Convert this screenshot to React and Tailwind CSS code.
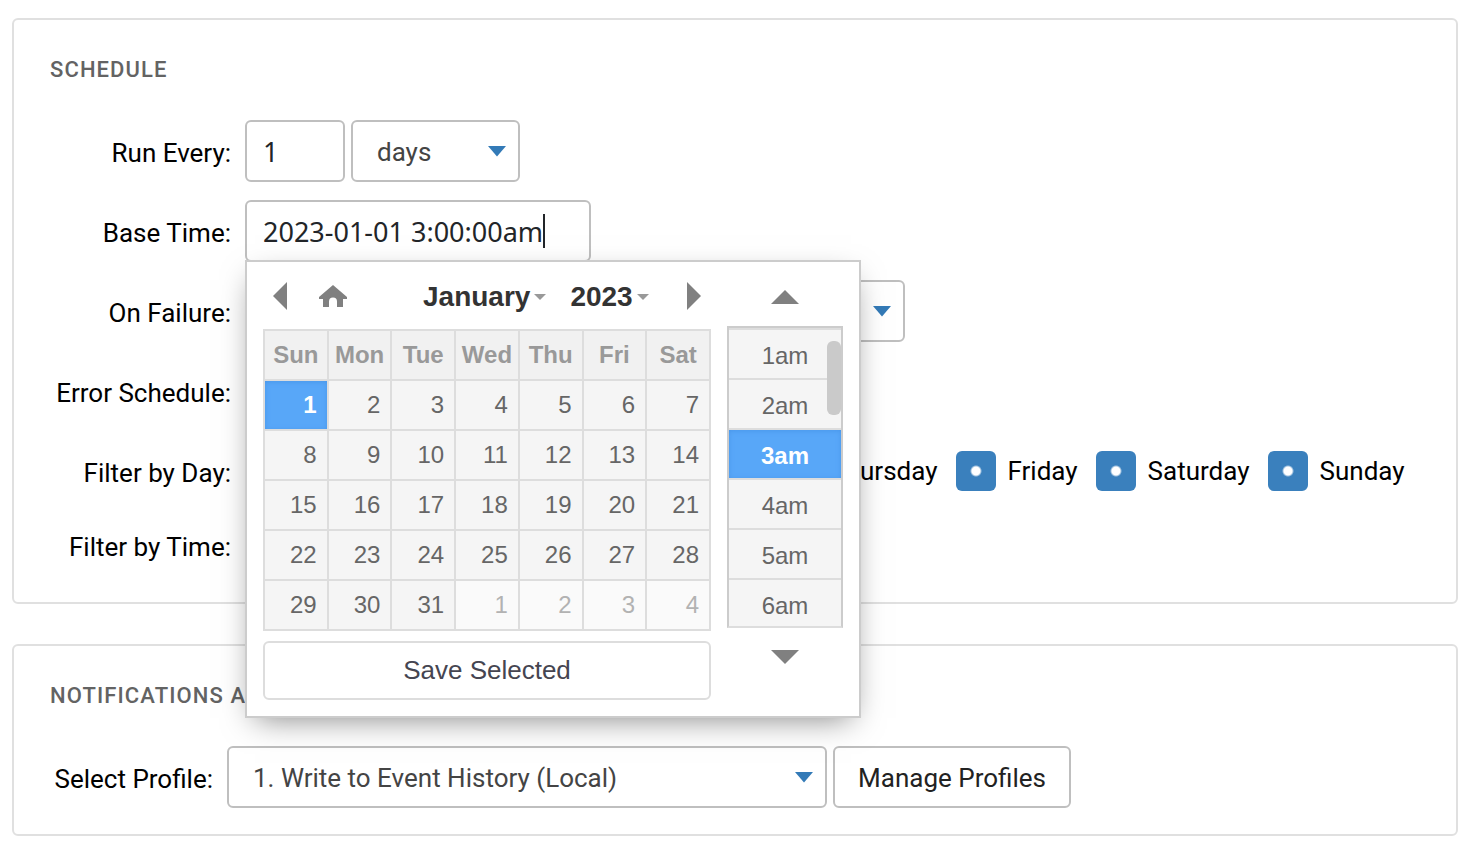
import { useState } from 'react';

const weekDays = ['Sun', 'Mon', 'Tue', 'Wed', 'Thu', 'Fri', 'Sat'];

const weeks = [
  [1, 2, 3, 4, 5, 6, 7],
  [8, 9, 10, 11, 12, 13, 14],
  [15, 16, 17, 18, 19, 20, 21],
  [22, 23, 24, 25, 26, 27, 28],
  [29, 30, 31, 32, 33, 34, 35],
];

const hours = ['1am', '2am', '3am', '4am', '5am', '6am'];

const filterDays = ['Monday', 'Tuesday', 'Wednesday', 'Thursday', 'Friday', 'Saturday', 'Sunday'];

function Card({ title, className, children }) {
  return (
    <section className={`rounded-md border-2 border-[#e0e0e0] px-9 pt-[34px] ${className}`}>
      <h2 className="mb-[34px] text-[22px] leading-8 font-medium tracking-wider whitespace-nowrap text-[#636363]">
        {title}
      </h2>
      {children}
    </section>
  );
}

function Row({ label, htmlFor, className = 'h-[62px]', children }) {
  return (
    <div className={`flex items-center gap-3.5 ${className}`}>
      <label htmlFor={htmlFor} className="w-[181px] shrink-0 pt-1 text-right whitespace-nowrap">
        {label}
      </label>
      {children}
    </div>
  );
}

function SelectBox({ id, className, children }) {
  return (
    <div className={`relative ${className}`}>
      <select
        id={id}
        className="h-[62px] w-full appearance-none rounded-md border-2 border-[#bfbfbf] bg-white pt-0.5 pl-6 text-[#444] outline-none"
      >
        {children}
      </select>
      <svg className="pointer-events-none absolute top-[26px] right-3.5 h-[11px] w-[18px]" viewBox="0 0 18 11">
        <path d="M0 0h18L9 10.5z" fill="#337ab7" />
      </svg>
    </div>
  );
}

function Arrow({ label, className, d, viewBox }) {
  return (
    <button type="button" aria-label={label} className={className}>
      <svg className="h-full w-full" viewBox={viewBox}>
        <path d={d} fill="#808080" />
      </svg>
    </button>
  );
}

function DateTimePicker() {
  const [day, setDay] = useState(1);
  const [hour, setHour] = useState('3am');

  return (
    <div className="absolute top-[60px] left-0 z-10 flex w-[616px] gap-4 border-2 border-[#ccc] bg-white p-4 pt-0 font-['Liberation_Sans',Arial,sans-serif] shadow-[0_10px_30px_-10px_rgba(0,0,0,0.5)]">
      <div className="w-[448px]">
        <div className="flex h-[67px] items-center px-2.5 text-[28px] font-bold text-[#333]">
          <Arrow label="Previous month" className="h-7 w-3.5" viewBox="0 0 14 28" d="M14 0v28L0 14z" />
          <button type="button" aria-label="Today" className="ml-8 h-6 w-7">
            <svg className="h-full w-full" viewBox="0 0 28 24">
              <path d="M14 1l14 12v2h-4v8h-6v-5.500a4 4 0 0 0-8 0V23H4v-8H0v-2z" fill="#808080" />
            </svg>
          </button>
          <button type="button" className="ml-[76px] flex items-center gap-1 pt-0.5">
            January
            <svg className="h-1.5 w-3" viewBox="0 0 12 6">
              <path d="M0 0h12L6 6z" fill="#999" />
            </svg>
          </button>
          <button type="button" className="ml-6 flex items-center gap-1 pt-0.5">
            2023
            <svg className="h-1.5 w-3" viewBox="0 0 12 6">
              <path d="M0 0h12L6 6z" fill="#999" />
            </svg>
          </button>
          <Arrow label="Next month" className="ml-auto h-7 w-3.5" viewBox="0 0 14 28" d="M0 0v28l14-14z" />
        </div>
        <table className="w-full table-fixed border-collapse text-[24px] leading-6 text-[#666]">
          <thead>
            <tr>
              {weekDays.map((name) => (
                <th key={name} className="h-[50px] border-2 border-[#ddd] bg-[#f1f1f1] p-0 font-bold text-[#999]">
                  {name}
                </th>
              ))}
            </tr>
          </thead>
          <tbody>
            {weeks.map((week) => (
              <tr key={week[0]}>
                {week.map((n) => (
                  <td key={n} className="h-[50px] border-2 border-[#ddd] bg-[#f5f5f5] p-0">
                    <button
                      type="button"
                      onClick={() => setDay(n)}
                      className={`block h-12 w-full pr-2.5 text-right ${
                        n === day
                          ? 'bg-[#58a7f8] font-bold text-white shadow-[inset_0_1px_5px_#4a97ea]'
                          : n > 31
                            ? 'bg-[#fafafa] text-[#b2b2b2]'
                            : ''
                      }`}
                    >
                      {n > 31 ? n - 31 : n}
                    </button>
                  </td>
                ))}
              </tr>
            ))}
          </tbody>
        </table>
        <button
          type="button"
          className="mt-2.5 h-[59px] w-full rounded-md border-2 border-[#ddd] bg-white pb-0.5 text-[26px] text-[#454551]"
        >
          Save Selected
        </button>
      </div>
      <div className="flex w-[116px] flex-col items-center">
        <div className="flex h-16 items-center pt-1.5">
          <Arrow label="Earlier hours" className="h-3.5 w-7" viewBox="0 0 28 14" d="M0 14h28L14 0z" />
        </div>
        <div className="relative h-[302px] w-full overflow-hidden border-2 border-[#ccc] border-b-[#ddd] text-[24px] leading-6 text-[#666]">
          {hours.map((h) => (
            <div key={h} className="h-[50px] border-t-2 border-[#ddd] bg-[#f5f5f5]">
              <button
                type="button"
                onClick={() => setHour(h)}
                className={`block h-12 w-full pt-1 ${
                  h === hour ? 'bg-[#58a7f8] font-bold text-white shadow-[inset_0_1px_5px_#4a97ea]' : ''
                }`}
              >
                {h}
              </button>
            </div>
          ))}
          <div className="absolute top-[13px] right-0 h-[74px] w-3.5 rounded-md bg-[#cacaca]" />
        </div>
        <Arrow label="Later hours" className="mt-[22px] h-3.5 w-7" viewBox="0 0 28 14" d="M0 0h28L14 14z" />
      </div>
    </div>
  );
}

function ScheduleCard() {
  return (
    <Card title="SCHEDULE" className="pb-8">
      <div className="flex flex-col gap-[18px]">
        <Row label="Run Every:" htmlFor="run-every">
          <div className="flex gap-1.5">
            <input
              id="run-every"
              type="text"
              defaultValue="1"
              className="h-[62px] w-[100px] rounded-md border-2 border-[#bfbfbf] px-4 font-['Noto_Sans',sans-serif] text-[27px] text-[#222529] outline-none"
            />
            <SelectBox id="run-unit" className="w-[169px]">
              <option>days</option>
            </SelectBox>
          </div>
        </Row>
        <Row label="Base Time:" htmlFor="base-time">
          <div className="relative">
            <input
              id="base-time"
              type="text"
              defaultValue="2023-01-01 3:00:00am"
              className="h-[62px] w-[346px] rounded-md border-2 border-[#bfbfbf] px-4 font-['Noto_Sans',sans-serif] text-[27px] text-[#222529] outline-none"
            />
            <span className="absolute top-3.5 left-[298px] h-[34px] w-0.5 bg-[#222529]" />
            <DateTimePicker />
          </div>
        </Row>
        <Row label="On Failure:" htmlFor="on-failure">
          <SelectBox id="on-failure" className="w-[660px]" />
        </Row>
        <Row label="Error Schedule:" />
        <Row label="Filter by Day:">
          <div className="flex gap-[18px]">
            {filterDays.map((name) => (
              <label key={name} className="flex items-center gap-3 whitespace-nowrap">
                <input
                  type="checkbox"
                  defaultChecked
                  className="size-10 appearance-none rounded-md bg-[#3a80bd] bg-[radial-gradient(circle,#fff_4px,transparent_6px)]"
                />
                {name}
              </label>
            ))}
          </div>
        </Row>
        <Row label="Filter by Time:" className="h-[50px]" />
      </div>
    </Card>
  );
}

function NotificationsCard() {
  return (
    <Card title="NOTIFICATIONS AND ALERTS" className="pb-[26px]">
      <div className="flex items-center">
        <label htmlFor="profile" className="w-[163px] pt-1 text-right whitespace-nowrap">
          Select Profile:
        </label>
        <SelectBox id="profile" className="ml-3.5 w-[600px]">
          <option>1. Write to Event History (Local)</option>
        </SelectBox>
        <button
          type="button"
          className="ml-1.5 h-[62px] w-[238px] rounded-md border-2 border-[#bfbfbf] bg-white pt-0.5 text-[#222]"
        >
          Manage Profiles
        </button>
      </div>
    </Card>
  );
}

export default function App() {
  return (
    <main className="flex flex-col gap-10 bg-white pt-[18px] pr-[3px] pb-5 pl-3 font-[Roboto,sans-serif] text-[26px] leading-8 text-black">
      <ScheduleCard />
      <NotificationsCard />
    </main>
  );
}
